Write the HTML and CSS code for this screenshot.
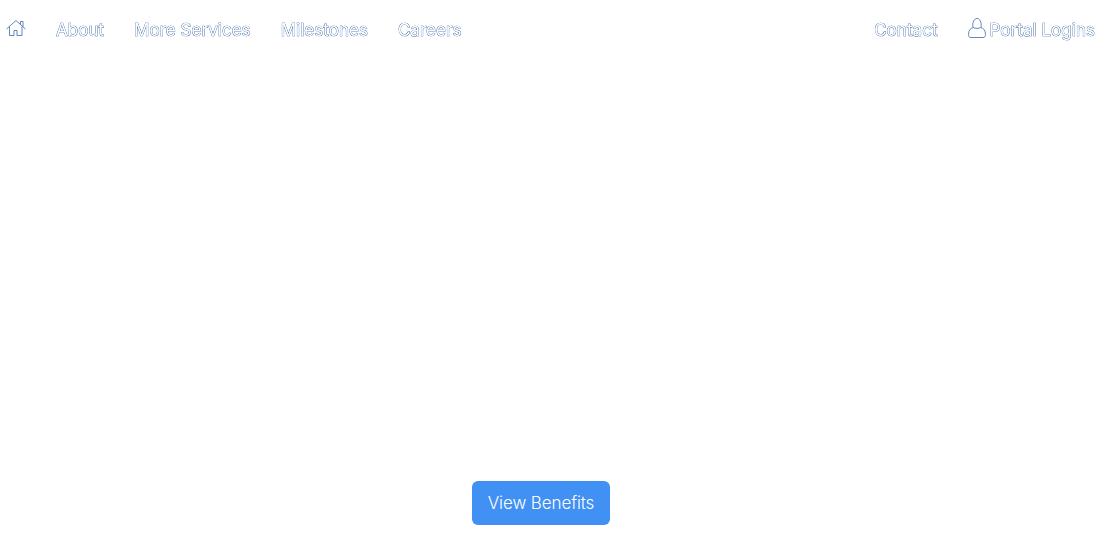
FILE: index.html
```html
<!DOCTYPE html>
<html lang="en">
<head>
<meta charset="utf-8">
<title>Benefits</title>
<link rel="stylesheet" href="styles.css">
</head>
<body>
<nav class="nav">
  <ul class="nav-group">
    <li><a class="nav-link" href="#" aria-label="Home">
      <svg class="icon-home" viewBox="0 0 20 18" width="20" height="18" fill="none" stroke="currentColor" stroke-width="0.9" aria-hidden="true">
        <path d="M.5 10 10 1.500l9.500 8.500"/>
        <path d="M3.500 7.500v9h4.500v-5h3v5h5v-9"/>
        <path d="M14.500 5.500V2.500h2.500v5.200"/>
      </svg>
    </a></li>
    <li><a class="nav-link" href="#">About</a></li>
    <li><a class="nav-link" href="#">More Services</a></li>
    <li><a class="nav-link" href="#">Milestones</a></li>
    <li><a class="nav-link" href="#">Careers</a></li>
  </ul>
  <ul class="nav-group">
    <li><a class="nav-link" href="#">Contact</a></li>
    <li><a class="nav-link nav-login" href="#">
      <svg class="icon-user" viewBox="0 0 18 20" width="18" height="20" fill="none" stroke="currentColor" stroke-width="0.9" aria-hidden="true">
        <path d="M5 9.500C4 4 6.500.5 9 .5s5 3.500 4 9"/>
        <path d="M.5 16.500c0-4 2-6.500 5-7 1.500 1.200 5.500 1.200 7 0 3 .5 5 3 5 7 0 2-1 3-2.500 3H3c-1.500 0-2.500-1-2.500-3Z"/>
      </svg>
      Portal Logins</a></li>
  </ul>
</nav>
<main class="hero">
  <a class="btn" href="#">View Benefits</a>
</main>
</body>
</html>
```
FILE: styles.css
```css
* { box-sizing: border-box; }
html, body { margin: 0; height: 100%; }
body {
  width: 1100px;
  height: 540px;
  overflow: hidden;
  background: #fff;
  font-family: Inter, "Liberation Sans", sans-serif;
  font-size: 17px;
  display: flex;
  flex-direction: column;
}
.nav {
  display: flex;
  justify-content: space-between;
  align-items: center;
  height: 59px;
  padding: 0 5px 0 6px;
  will-change: transform;
}
.nav-group {
  display: flex;
  align-items: center;
  gap: 30px;
  list-style: none;
  margin: 0;
  padding: 0;
}
.nav-link {
  display: flex;
  align-items: center;
  color: #fff;
  text-decoration: none;
  letter-spacing: 0.03px;
  -webkit-text-stroke: 0.7px #1f5299;
  paint-order: stroke fill;
  white-space: nowrap;
}
.nav-login { gap: 4px; }
.icon-home, .icon-user { color: #4f79b5; display: block; margin-bottom: 3px; }
.hero {
  flex: 1;
  display: flex;
  justify-content: center;
  align-items: flex-end;
  padding: 0 18px 15px 0;
}
.btn {
  display: block;
  padding: 0 16px;
  font-size: 17px;
  font-weight: 300;
  letter-spacing: -0.1px;
  line-height: 44px;
  height: 44px;
  border-radius: 6px;
  background: #4190f3;
  color: #fff;
  text-decoration: none;
}
```
